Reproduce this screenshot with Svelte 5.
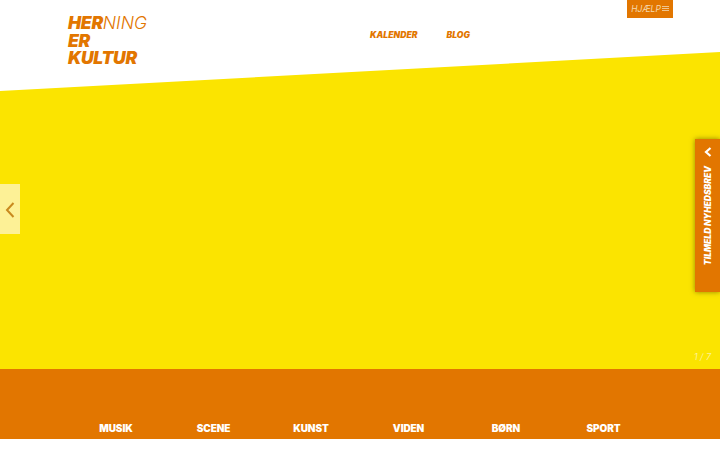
<script>
  const topLinks = ["Kalender", "Blog"];
  const categories = [
    { name: "Musik", center: 116 },
    { name: "Scene", center: 213.5 },
    { name: "Kunst", center: 311 },
    { name: "Viden", center: 408.5 },
    { name: "Børn", center: 506 },
    { name: "Sport", center: 603.5 }
  ];
</script>

<div class="page">
  <div class="hero">
    <div class="slant"></div>

    <header>
      <a class="logo" href="#top">
        <span><b>HER</b>NING</span>
        <span><b>ER</b></span>
        <span><b>KULTUR</b></span>
      </a>
      <nav class="top-nav">
        {#each topLinks as link}
          <a href="#top">{link}</a>
        {/each}
      </nav>
      <a class="help" href="#top">
        HJÆLP
        <svg width="7" height="6" viewBox="0 0 7 6"><path d="M0 .5h7M0 2.500h7M0 4.500h7" stroke="#eec48f" stroke-width="1" /></svg>
      </a>
    </header>

    <button class="prev" aria-label="Forrige">
      <svg width="10" height="16" viewBox="0 0 10 16"><path d="M8.500 1 2 8l6.500 7" fill="none" stroke="#c98a1e" stroke-width="2" /></svg>
    </button>

    <aside class="newsletter">
      <svg width="8" height="10" viewBox="0 0 8 10"><path d="M6.500 1 2 5l4.500 4" fill="none" stroke="#fff" stroke-width="2.200" /></svg>
      <span>Tilmeld nyhedsbrev</span>
    </aside>

    <div class="counter">1 / 7</div>
  </div>

  <nav class="categories">
    {#each categories as cat}
      <a href="#top" style="left: {cat.center}px">{cat.name}</a>
    {/each}
  </nav>
</div>

<style>
  :global(body) {
    margin: 0;
    background: #fff;
    overflow: hidden;
  }

  .page {
    width: 720px;
    height: 450px;
    font-family: Inter, "Noto Sans", sans-serif;
  }

  a {
    text-decoration: none;
  }

  .hero {
    position: relative;
    height: 369px;
  }

  .slant {
    position: absolute;
    inset: 0;
    background: #fbe400;
    clip-path: polygon(0 91px, 100% 52px, 100% 100%, 0 100%);
  }

  header {
    position: relative;
    display: flex;
    align-items: flex-start;
    padding-left: 68px;
  }

  .logo {
    display: flex;
    flex-direction: column;
    margin-top: 14px;
    color: #e27600;
    font-size: 17.500px;
    line-height: 17.500px;
    font-style: italic;
    font-weight: 300;
    width: 302px;
  }

  .logo b {
    font-weight: 900;
    letter-spacing: -0.3px;
  }

  .top-nav {
    display: flex;
    gap: 29px;
    margin-top: 29px;
    flex: 1;
  }

  .top-nav a {
    color: #e27600;
    font-size: 8.600px;
    line-height: 12px;
    font-weight: 900;
    font-style: italic;
    text-transform: uppercase;
  }

  .help {
    display: flex;
    align-items: center;
    justify-content: center;
    gap: 1px;
    width: 46px;
    height: 18px;
    margin-right: 47px;
    background: #e27600;
    color: #f5d9ae;
    font-size: 8.500px;
    font-style: italic;
  }

  .prev {
    position: absolute;
    left: 0;
    top: 184px;
    width: 20px;
    height: 50px;
    padding: 0;
    border: 0;
    background: #fdf196;
    display: flex;
    align-items: center;
    justify-content: center;
  }

  .prev svg {
    margin-top: 2px;
  }

  .newsletter {
    position: absolute;
    right: 0;
    top: 139px;
    width: 25px;
    height: 153px;
    box-sizing: border-box;
    padding-top: 8px;
    background: #e27600;
    box-shadow: 0 0 5px rgba(70, 70, 0, 0.6);
    display: flex;
    flex-direction: column;
    align-items: center;
    gap: 9px;
    color: #fff;
  }

  .newsletter span {
    writing-mode: vertical-rl;
    transform: rotate(180deg);
    font-size: 8.500px;
    line-height: 12px;
    font-weight: 900;
    font-style: italic;
    text-transform: uppercase;
    white-space: nowrap;
  }

  .counter {
    position: absolute;
    right: 9px;
    top: 351px;
    font-size: 9px;
    line-height: 12px;
    color: #fdf196;
    font-style: italic;
  }

  .categories {
    position: relative;
    height: 70px;
    background: #e27600;
  }

  .categories a {
    position: absolute;
    top: 52px;
    transform: translateX(-50%);
    color: #fff;
    font-size: 10px;
    line-height: 14px;
    font-weight: 900;
    letter-spacing: -0.1px;
    text-transform: uppercase;
  }
</style>
